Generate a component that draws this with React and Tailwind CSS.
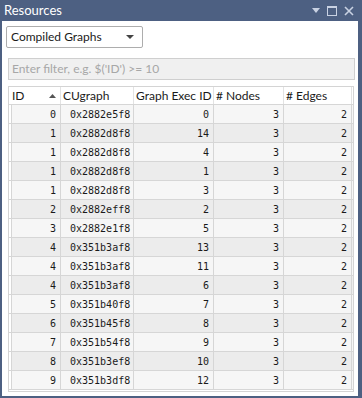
const ROWS = [
  [0, '0x2882e5f8', 0, 3, 2],
  [1, '0x2882d8f8', 14, 3, 2],
  [1, '0x2882d8f8', 4, 3, 2],
  [1, '0x2882d8f8', 1, 3, 2],
  [1, '0x2882d8f8', 3, 3, 2],
  [2, '0x2882eff8', 2, 3, 2],
  [3, '0x2882e1f8', 5, 3, 2],
  [4, '0x351b3af8', 13, 3, 2],
  [4, '0x351b3af8', 11, 3, 2],
  [4, '0x351b3af8', 6, 3, 2],
  [5, '0x351b40f8', 7, 3, 2],
  [6, '0x351b45f8', 8, 3, 2],
  [7, '0x351b54f8', 9, 3, 2],
  [8, '0x351b3ef8', 10, 3, 2],
  [9, '0x351b3df8', 12, 3, 2],
]

const ui = { fontFamily: 'Lato, "Open Sans", sans-serif' }
const mono = { fontFamily: '"DejaVu Sans Mono", "Liberation Mono", monospace' }

function TitleIcons() {
  return (
    <div className="flex items-center gap-[7px] pr-[8px]">
      <svg width="8" height="5" viewBox="0 0 8 5"><path d="M0 0h8L4 5z" fill="#c9d2e3" /></svg>
      <svg width="10" height="10" viewBox="0 0 10 10">
        <rect x="0.5" y="0.5" width="9" height="9" fill="none" stroke="#c9d2e3" />
        <rect x="0" y="0" width="10" height="2" fill="#c9d2e3" />
      </svg>
      <svg width="10" height="10" viewBox="0 0 10 10">
        <path d="M1 1L9 9M9 1L1 9" stroke="#c9d2e3" strokeWidth="1.6" />
      </svg>
    </div>
  )
}

export default function App() {
  return (
    <div className="w-[362px] h-[398px] bg-[#4d6082] flex flex-col" style={ui}>
      <div className="h-[21px] flex items-center justify-between shrink-0">
        <span className="pl-[4px] text-[13px] text-white leading-none">Resources</span>
        <TitleIcons />
      </div>
      <div className="ml-[2px] mr-[4px] mb-[2px] flex-1 bg-white flex flex-col">
        <div className="pt-[5px] pl-[4px]">
          <div className="w-[137px] h-[22px] border border-[#adadad] rounded-[2px] bg-white flex items-center justify-between px-[4px]">
            <span className="text-[12px] text-[#1a1a1a]">Compiled Graphs</span>
            <svg width="8" height="4" viewBox="0 0 8 4" className="mr-[4px]"><path d="M0 0h8L4 4z" fill="#444" /></svg>
          </div>
        </div>
        <div className="mt-[10px] ml-[6px] mr-[3px] h-[22px] bg-[#f0f0f0] border border-[#cfcfcf] flex items-center px-[3px]">
          <span className="text-[12px] text-[#a7a7a7]">Enter filter, e.g. $('ID') &gt;= 10</span>
        </div>
        <div className="mt-[6px] ml-[6px] w-[346px] h-[306px] border border-[#d4d4d4] bg-white">
          <div className="flex h-[18px] border-b border-[#d6d6d6] text-[12px] text-[#1a1a1a]">
            <div className="w-[52px] border-r border-[#e3e3e3] flex items-center justify-between pl-[3px] pr-[4px]">
              <span>ID</span>
              <svg width="7" height="4" viewBox="0 0 7 4"><path d="M0 4h7L3.5 0z" fill="#555" /></svg>
            </div>
            <div className="w-[73px] border-r border-[#e3e3e3] flex items-center pl-[2px]">CUgraph</div>
            <div className="w-[80px] border-r border-[#e3e3e3] flex items-center pl-[2px]">Graph Exec ID</div>
            <div className="w-[70px] border-r border-[#e3e3e3] flex items-center pl-[2px]"># Nodes</div>
            <div className="w-[68px] border-r border-[#e3e3e3] flex items-center pl-[2px]"># Edges</div>
          </div>
          {ROWS.map((r, i) => (
            <div
              key={i}
              className={`flex h-[19px] border-b border-[#d6d6d6] text-[10px] text-[#1a1a1a] ${i % 2 === 0 ? 'bg-[#f6f6f6]' : 'bg-[#ececec]'}`}
              style={mono}
            >
              <div className="w-[3px] border-r border-[#d6d6d6] bg-white" />
              <div className="w-[49px] border-r border-[#d6d6d6] flex items-center justify-end pr-[4px]">{r[0]}</div>
              <div className="w-[73px] border-r border-[#d6d6d6] flex items-center pl-[9px]">{r[1]}</div>
              <div className="w-[80px] border-r border-[#d6d6d6] flex items-center justify-end pr-[4px]">{r[2]}</div>
              <div className="w-[70px] border-r border-[#d6d6d6] flex items-center justify-end pr-[4px]">{r[3]}</div>
              <div className="w-[68px] border-r border-[#d6d6d6] flex items-center justify-end pr-[4px]">{r[4]}</div>
            </div>
          ))}
        </div>
      </div>
    </div>
  )
}
